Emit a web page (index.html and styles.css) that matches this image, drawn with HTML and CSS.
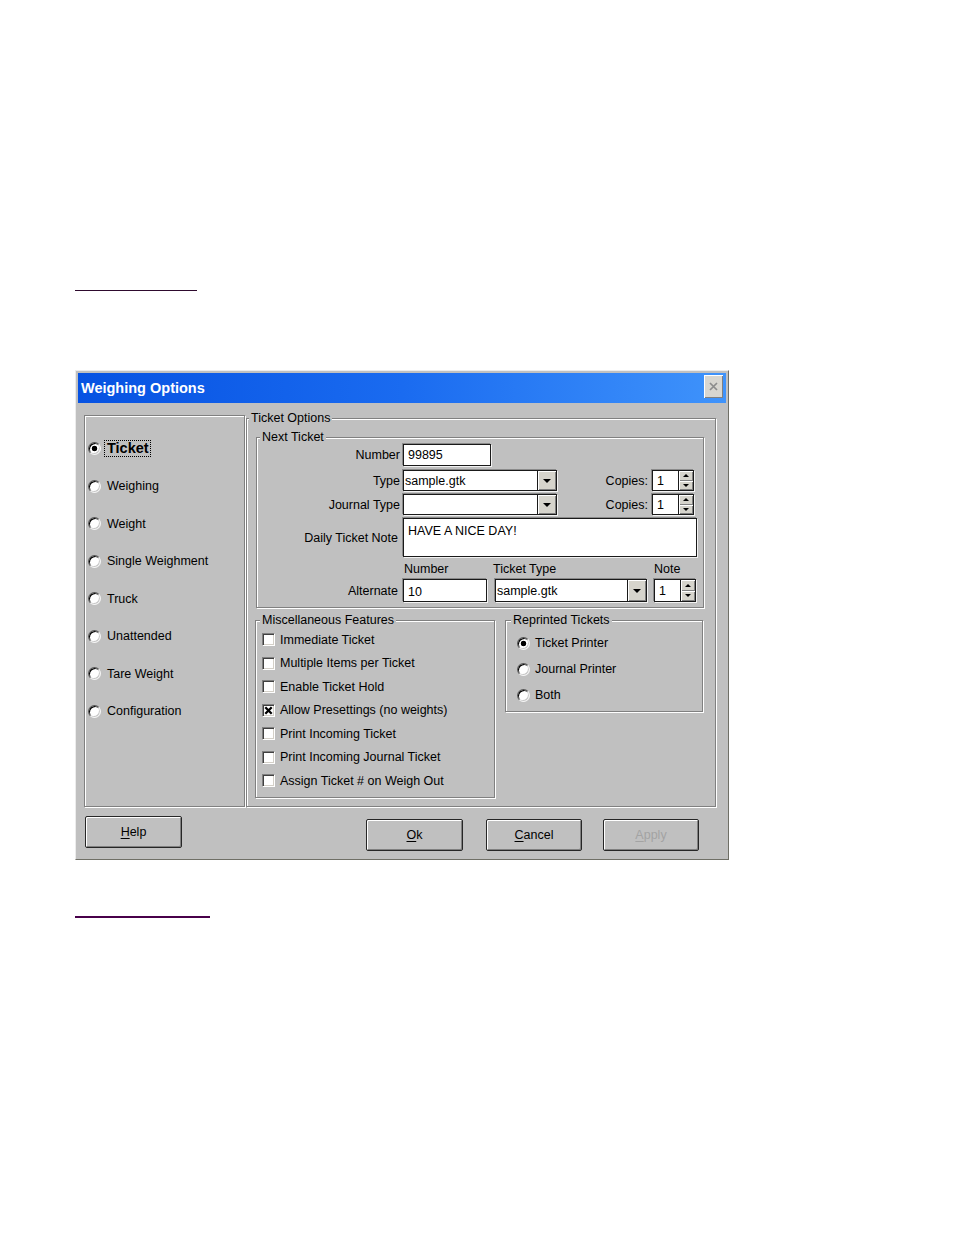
FILE: index.html
```html
<!DOCTYPE html>
<html lang="en">
<head>
<meta charset="utf-8">
<title>Weighing Options</title>
<link rel="stylesheet" href="styles.css">
</head>
<body>
<div class="page">
  <a class="navlink navlink-top" href="#"></a>
  <div class="dialog">
    <div class="titlebar">
      <span class="title">Weighing Options</span>
      <span class="closebtn"><svg width="9" height="9" viewBox="0 0 9 9"><path d="M1 1L8 8M8 1L1 8" stroke="#8c8c8c" stroke-width="1.7"/></svg></span>
    </div>
    <div class="dlgbody">
      <div class="main">
        <div class="sidepanel etched">
          <div class="opt"><span class="radio on"></span><span class="focus">Ticket</span></div>
          <div class="opt"><span class="radio"></span><span>Weighing</span></div>
          <div class="opt"><span class="radio"></span><span>Weight</span></div>
          <div class="opt"><span class="radio"></span><span>Single Weighment</span></div>
          <div class="opt"><span class="radio"></span><span>Truck</span></div>
          <div class="opt"><span class="radio"></span><span>Unattended</span></div>
          <div class="opt"><span class="radio"></span><span>Tare Weight</span></div>
          <div class="opt"><span class="radio"></span><span>Configuration</span></div>
        </div>
        <fieldset class="group group-ticket">
          <legend>Ticket Options</legend>
          <fieldset class="group group-next">
            <legend>Next Ticket</legend>
            <div class="frow frow-1">
              <span class="flabel">Number</span>
              <span class="edit edit-number">99895</span>
            </div>
            <div class="frow frow-2">
              <span class="flabel">Type</span>
              <span class="combo combo-type"><span class="combo-text">sample.gtk</span><span class="dropbtn"><i class="tri-down"></i></span></span>
              <span class="copies-label">Copies:</span>
              <span class="spin"><span class="spin-text">1</span><span class="spin-btns"><span class="spin-half"><i class="tri-up"></i></span><span class="spin-half"><i class="tri-down small"></i></span></span></span>
            </div>
            <div class="frow frow-3">
              <span class="flabel">Journal Type</span>
              <span class="combo combo-type"><span class="combo-text"></span><span class="dropbtn"><i class="tri-down"></i></span></span>
              <span class="copies-label">Copies:</span>
              <span class="spin"><span class="spin-text">1</span><span class="spin-btns"><span class="spin-half"><i class="tri-up"></i></span><span class="spin-half"><i class="tri-down small"></i></span></span></span>
            </div>
            <div class="frow frow-4">
              <span class="flabel flabel-note">Daily Ticket Note</span>
              <span class="edit notebox">HAVE A NICE DAY!</span>
            </div>
            <div class="frow frow-5">
              <span class="hdr hdr-number">Number</span>
              <span class="hdr hdr-type">Ticket Type</span>
              <span class="hdr">Note</span>
            </div>
            <div class="frow frow-6">
              <span class="flabel flabel-alt">Alternate</span>
              <span class="edit edit-alt">10</span>
              <span class="combo combo-alt"><span class="combo-text">sample.gtk</span><span class="dropbtn"><i class="tri-down"></i></span></span>
              <span class="spin spin-alt"><span class="spin-text">1</span><span class="spin-btns"><span class="spin-half"><i class="tri-up"></i></span><span class="spin-half"><i class="tri-down small"></i></span></span></span>
            </div>
          </fieldset>
          <div class="lower">
            <fieldset class="group group-misc">
              <legend>Miscellaneous Features</legend>
              <div class="chk-row"><span class="chk"></span><span>Immediate Ticket</span></div>
              <div class="chk-row"><span class="chk"></span><span>Multiple Items per Ticket</span></div>
              <div class="chk-row"><span class="chk"></span><span>Enable Ticket Hold</span></div>
              <div class="chk-row"><span class="chk"><svg width="9" height="9" viewBox="0 0 9 9"><path d="M1.3 1.3L7.7 7.7M7.7 1.3L1.3 7.7" stroke="#000" stroke-width="2.3"/></svg></span><span>Allow Presettings (no weights)</span></div>
              <div class="chk-row"><span class="chk"></span><span>Print Incoming Ticket</span></div>
              <div class="chk-row"><span class="chk"></span><span>Print Incoming Journal Ticket</span></div>
              <div class="chk-row"><span class="chk"></span><span>Assign Ticket # on Weigh Out</span></div>
            </fieldset>
            <fieldset class="group group-reprint">
              <legend>Reprinted Tickets</legend>
              <div class="rad-row"><span class="radio on"></span><span>Ticket Printer</span></div>
              <div class="rad-row"><span class="radio"></span><span>Journal Printer</span></div>
              <div class="rad-row"><span class="radio"></span><span>Both</span></div>
            </fieldset>
          </div>
        </fieldset>
      </div>
      <div class="btnrow">
        <span class="btn btn-help"><u>H</u>elp</span>
        <span class="btn btn-ok"><u>O</u>k</span>
        <span class="btn btn-cancel"><u>C</u>ancel</span>
        <span class="btn btn-apply disabled"><u>A</u>pply</span>
      </div>
    </div>
  </div>
  <a class="navlink navlink-bottom" href="#"></a>
</div>
</body>
</html>
```

FILE: styles.css
```css
* { box-sizing: border-box; }
html, body { margin: 0; padding: 0; background: #fff; }
body {
  font-family: "Liberation Sans", Arial, sans-serif;
  font-size: 12.5px;
  color: #000;
}
.page { padding: 290px 0 300px 75px; }
.navlink { display: block; }
.navlink-top { width: 122px; height: 1px; background: #2e0a2e; }
.navlink-bottom { width: 135px; height: 2px; background: #48004a; margin-top: 56px; }

.dialog {
  margin-top: 79px;
  width: 654px;
  height: 490px;
  background: #c0c0c0;
  border: 1px solid;
  border-color: #ececec #6f6f66 #6f6f66 #ececec;
  padding: 2px;
  display: flex;
  flex-direction: column;
}
.titlebar {
  height: 30px;
  flex: none;
  display: flex;
  align-items: flex-start;
  justify-content: space-between;
  padding: 0 3px;
  background: linear-gradient(to right, #0652e2 0%, #1a6bf0 50%, #3f93fb 100%);
}
.title {
  font-weight: bold;
  font-size: 14.5px;
  color: #fff;
  line-height: 30px;
}
.closebtn {
  margin-top: 2px;
  width: 19px;
  height: 23px;
  background: #d8d6d0;
  display: flex;
  align-items: center;
  justify-content: center;
  box-shadow: inset 1px 1px 0 #fff, inset -1px -1px 0 #808080;
}
.dlgbody { flex: 1; display: flex; flex-direction: column; }
.main { height: 404px; flex: none; display: flex; align-items: flex-start; padding-left: 6px; }

.etched { border: 1px solid #808080; box-shadow: inset 1px 1px 0 #fff, 1px 1px 0 #fff; }

.sidepanel {
  margin-top: 12px;
  width: 161px;
  height: 392px;
  flex: none;
  padding: 14px 0 0 3px;
}
.opt { height: 37.5px; display: flex; align-items: center; gap: 6px; }
.focus {
  font-weight: bold;
  font-size: 14.5px;
  line-height: 15px;
  border: 1px dotted #000;
  padding: 0 1px 0 2px;
  margin-left: -3px;
}

.radio {
  flex: none;
  width: 13px;
  height: 13px;
  border-radius: 50%;
  background: #fff;
  border: 1px solid;
  border-color: #555 #f4f4f4 #f4f4f4 #555;
  box-shadow: inset 1px 1px 0 #000, inset -1px -1px 0 #c8c8c8;
}
.radio.on { background: radial-gradient(circle at 50% 50%, #000 0 2.5px, #fff 3.1px); }

.group {
  margin: 0;
  padding: 0;
  min-width: 0;
  border: 1px solid #808080;
  box-shadow: inset 1px 1px 0 #fff, 1px 1px 0 #fff;
}
.group > legend { padding: 0 2px; line-height: 14px; background: #c0c0c0; margin-left: 2px; }

.group-ticket { margin: 8px 0 0 1px; width: 470px; height: 396px; flex: none; padding: 0 0 0 9px; }
.group-ticket > legend { margin-left: -7px; }
.group-next { margin-top: 5px; width: 448px; padding: 0 0 5px 0; }
.group-next > legend { margin-left: 3px; }

.frow { display: flex; align-items: center; }
.frow-1 { height: 22px; }
.frow-2 { height: 21px; margin-top: 4px; }
.frow-3 { height: 21px; margin-top: 3px; }
.frow-4 { height: 39px; margin-top: 3px; }
.frow-5 { height: 14px; margin-top: 5px; padding-left: 147px; line-height: 14px; }
.frow-6 { height: 23px; margin-top: 3px; }

.flabel { width: 146px; flex: none; text-align: right; padding-right: 3px; }
.flabel-note, .flabel-alt { padding-right: 5px; }

.edit, .combo, .spin {
  height: 100%;
  flex: none;
  background: #fff;
  border: 1px solid #1a1a1a;
  box-shadow: -1px -1px 0 #8a8a8a, 1px 1px 0 #f2f2f2;
  display: flex;
  align-items: center;
  overflow: hidden;
  white-space: nowrap;
}
.edit { padding-left: 4px; }
.edit-number { width: 88px; }
.notebox { width: 294px; align-items: flex-start; padding: 5px 0 0 4px; }
.edit-alt { width: 84px; padding-top: 2px; }

.combo-type { width: 154px; }
.combo-alt { width: 152px; margin-left: 8px; }
.combo-text { flex: 1; padding-left: 1px; }
.dropbtn {
  width: 19px;
  height: 100%;
  flex: none;
  background: #d6d4cc;
  border-left: 1px solid #1a1a1a;
  box-shadow: inset 1px 1px 0 #fff, inset -1px -1px 0 #808080;
  display: flex;
  align-items: center;
  justify-content: center;
}
.tri-down { display: block; width: 0; height: 0; border-left: 4px solid transparent; border-right: 4px solid transparent; border-top: 4px solid #000; }
.tri-down.small { border-left-width: 3px; border-right-width: 3px; border-top-width: 3px; }
.tri-up { display: block; width: 0; height: 0; border-left: 3px solid transparent; border-right: 3px solid transparent; border-bottom: 3px solid #000; }

.copies-label { width: 95px; flex: none; text-align: right; padding-right: 4px; }
.spin { width: 42px; }
.spin-alt { margin-left: 7px; }
.spin-text { flex: 1; padding-left: 4px; }
.spin-btns { width: 15px; height: 100%; flex: none; display: flex; flex-direction: column; border-left: 1px solid #1a1a1a; }
.spin-half {
  flex: 1;
  background: #d6d4cc;
  box-shadow: inset 1px 1px 0 #fff, inset -1px -1px 0 #808080;
  display: flex;
  align-items: center;
  justify-content: center;
}

.hdr { display: inline-block; }
.hdr-number { width: 89px; }
.hdr-type { width: 161px; }

.lower { display: flex; align-items: flex-start; gap: 10px; margin: 5px 0 0 -1px; }
.group-misc { width: 240px; padding: 1px 0 4px 6px; }
.group-misc > legend { margin-left: -2px; }
.group-reprint { width: 198px; padding: 3px 0 3px 11px; }
.group-reprint > legend { margin-left: -6px; }

.chk-row { height: 23.5px; display: flex; align-items: center; gap: 5px; }
.rad-row { height: 26px; display: flex; align-items: center; gap: 5px; }
.chk {
  flex: none;
  width: 13px;
  height: 13px;
  background: #fff;
  border: 1px solid;
  border-color: #808080 #fff #fff #808080;
  box-shadow: inset 1px 1px 0 #404040, inset -1px -1px 0 #d4d0c8;
  display: flex;
  align-items: center;
  justify-content: center;
}

.btnrow { flex: none; display: flex; align-items: flex-start; padding-left: 7px; }
.btn {
  flex: none;
  width: 97px;
  height: 32px;
  margin-top: 12px;
  border: 1px solid #262626;
  border-radius: 2px;
  box-shadow: inset 1px 1px 0 #fff, inset -1px -1px 0 #808080;
  display: flex;
  align-items: center;
  justify-content: center;
}
.btn u { text-underline-offset: 2px; }
.btn-help { margin-top: 9px; }
.btn-ok { margin-left: 184px; }
.btn-cancel { margin-left: 23px; width: 96px; }
.btn-apply { margin-left: 21px; width: 96px; }
.btn.disabled { color: #a3a3a3; }
```
